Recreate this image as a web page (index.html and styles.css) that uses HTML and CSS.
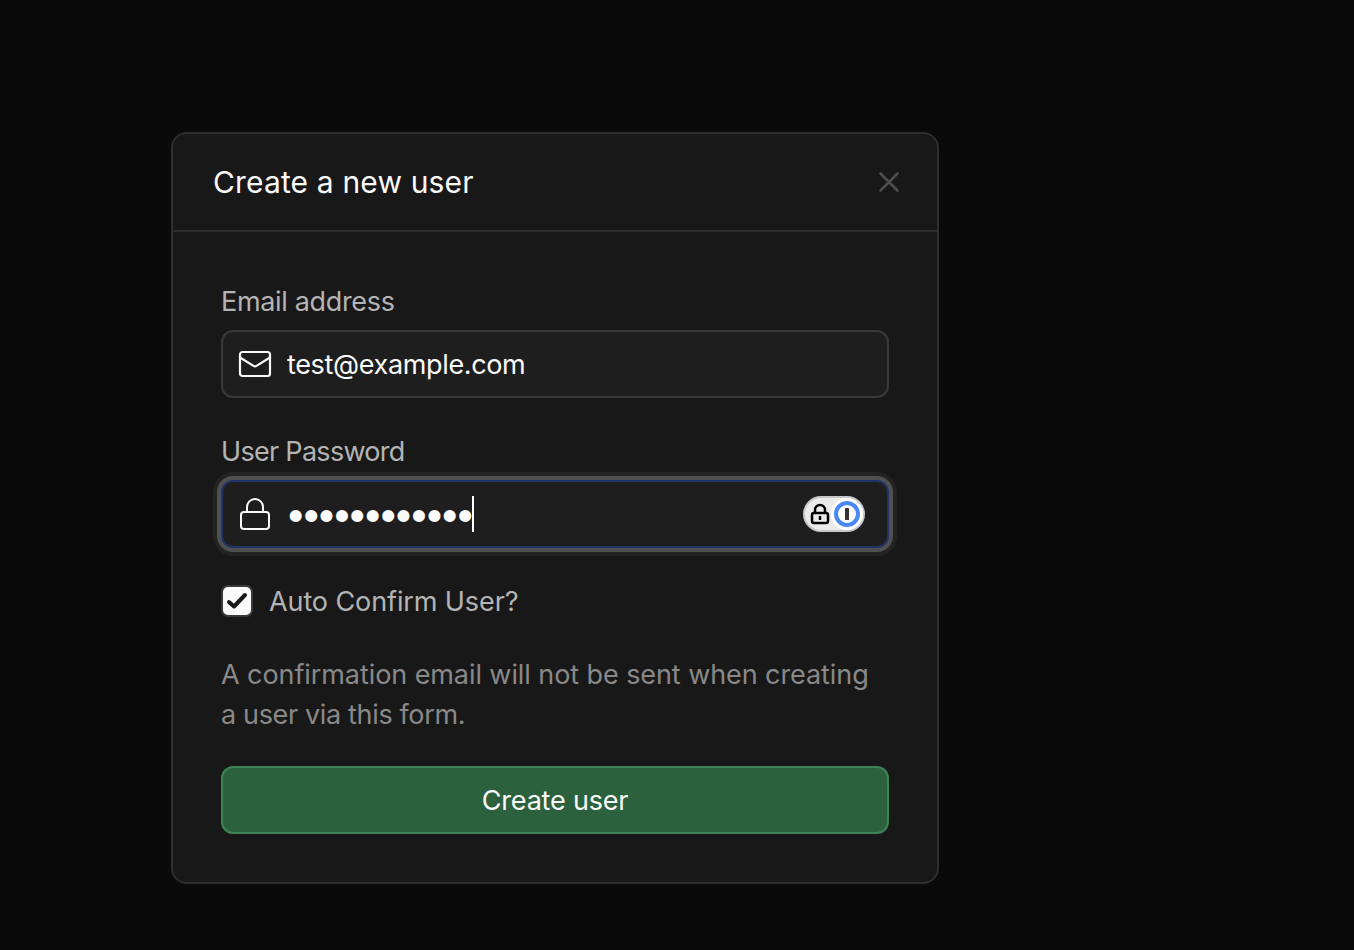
FILE: index.html
```html
<!DOCTYPE html>
<html lang="en">
<head>
<meta charset="utf-8">
<title>Create a new user</title>
<link rel="stylesheet" href="styles.css">
</head>
<body>
<main class="modal">
  <header class="modal-header">
    <h1 class="title">Create a new user</h1>
    <svg class="close" width="24" height="24" viewBox="0 0 24 24"><path d="M3.500 3.500l17 17M20.500 3.500l-17 17"/></svg>
  </header>
  <form class="modal-body">
    <div class="label label-email">Email address</div>
    <div class="field">
      <svg class="icon" width="36" height="36" viewBox="0 0 36 36"><rect x="3" y="6" width="30" height="24" rx="2.500"/><path d="m3 11.500 13.500 8.400q1.500 .9 3 0L33 11.500"/></svg>
      <span class="value">test@example.com</span>
    </div>
    <div class="label label-password">User Password</div>
    <div class="field field-focus">
      <svg class="icon icon-lock" width="36" height="36" viewBox="0 0 36 36"><rect x="4" y="16" width="28" height="17" rx="3"/><path d="M10 16v-5a8 8 0 0 1 16 0v5"/></svg>
      <span class="dots">••••••••••••</span><span class="caret"></span>
      <svg class="manager" width="62" height="36" viewBox="0 0 62 36">
        <rect x="1" y="1" width="60" height="34" rx="17" fill="#ebebeb" stroke="#c6c8c9" stroke-width="2"/>
        <circle cx="44" cy="18" r="16" fill="#fff"/>
        <circle cx="44" cy="18" r="11" fill="#fff" stroke="#4889f8" stroke-width="4"/>
        <rect x="42" y="12" width="4" height="12" rx=".6" fill="#333"/>
        <rect x="9" y="17" width="16" height="10" rx="2" fill="none" stroke="#000" stroke-width="2.500"/>
        <path d="M12 17v-3a5 5 0 0 1 10 0v3M17 20v4" fill="none" stroke="#000" stroke-width="2.500"/>
      </svg>
    </div>
    <div class="check-row">
      <span class="checkbox"><svg width="28" height="28" viewBox="0 0 28 28"><path d="m6 15 5 4.500L22 8"/></svg></span>
      <span class="check-label">Auto Confirm User?</span>
    </div>
    <p class="note"><span class="note-a">A confirmation email will not be sent when creating</span><br><span class="note-b">a user via this form.</span></p>
    <button type="button" class="submit">Create user</button>
  </form>
</main>
</body>
</html>
```
FILE: styles.css
```css
* { box-sizing: border-box; }
body {
  margin: 0;
  padding: 132px 0 0 171px;
  height: 950px;
  overflow: hidden;
  background: #0a0a0a;
  color: #fafafa;
  font: 430 27px/40px Inter, "Liberation Sans", sans-serif;
}
.modal {
  width: 768px;
  height: 752px;
  background: #181818;
  border: 2px solid #2e2e2e;
  border-radius: 16px;
}
.modal-header {
  display: flex;
  align-items: center;
  justify-content: space-between;
  height: 98px;
  padding: 0 36px 0 40px;
  border-bottom: 2px solid #2e2e2e;
}
.title { margin: 0; font-size: 30px; font-weight: 430; letter-spacing: .15px; }
.close { fill: none; stroke: #4d4d4d; stroke-width: 2.600; stroke-linecap: round; }
.modal-body { display: flex; flex-direction: column; padding: 50px 48px 0; }
.label { height: 40px; color: #b4b4b4; }
.label-email { letter-spacing: -.33px; }
.field {
  display: flex;
  align-items: center;
  height: 68px;
  margin-top: 8px;
  padding: 0 22px 0 14px;
  background: #1e1e1e;
  border: 2px solid #393939;
  border-radius: 12px;
}
.icon { flex: none; margin-right: 14px; fill: none; stroke: #fafafa; stroke-width: 2.200; stroke-linejoin: round; }
.icon-lock { margin-right: 15px; stroke-width: 2; }
.value { padding-top: 2px; letter-spacing: -.35px; }
.label-password { margin-top: 34px; letter-spacing: -.7px; }
.field-focus { border-color: #1f3566; box-shadow: 0 0 0 4px #505050, 0 0 0 8px #232323; }
.dots { padding-top: 4px; font: 44px/60px "Liberation Sans", sans-serif; }
.caret { width: 2px; height: 36px; margin-left: -1px; background: #fff; }
.manager { margin-left: auto; }
.check-row { display: flex; align-items: center; height: 40px; margin-top: 33px; gap: 16px; color: #b4b4b4; }
.check-label { padding-top: 2px; letter-spacing: -.1px; }
.checkbox { display: flex; width: 32px; height: 32px; background: #fafafa; border: 2px solid #393939; border-radius: 7px; }
.checkbox path { fill: none; stroke: #181818; stroke-width: 4; stroke-linecap: round; stroke-linejoin: round; }
.note { margin: 34px 0 0; color: #898989; white-space: nowrap; }
.note-a { letter-spacing: -.08px; }
.note-b { letter-spacing: -.35px; }
.submit {
  height: 68px;
  margin-top: 31px;
  padding: 2px 0 0;
  background: #2b623d;
  border: 2px solid #3c8453;
  border-radius: 12px;
  color: #fafafa;
  font: inherit;
  letter-spacing: -.2px;
}
```
